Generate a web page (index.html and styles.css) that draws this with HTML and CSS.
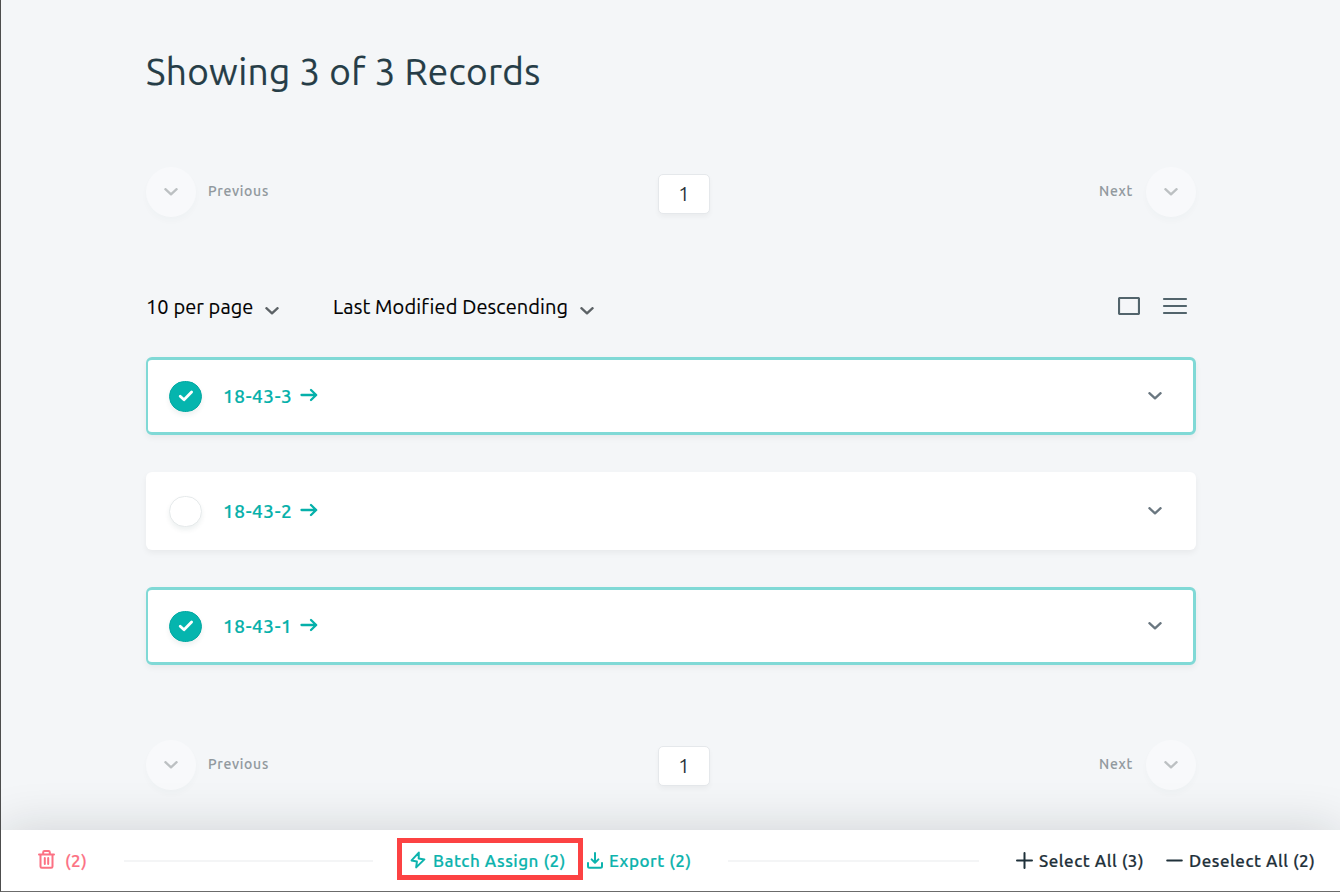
FILE: index.html
```html
<!DOCTYPE html>
<html lang="en">
<head>
<meta charset="utf-8">
<title>Records</title>
<link rel="stylesheet" href="styles.css">
</head>
<body>
<svg class="defs" width="0" height="0">
  <symbol id="chevron" viewBox="0 0 14 8"><path d="M1.400 1.200 7 6.400l5.600-5.200"/></symbol>
  <symbol id="arrow" viewBox="0 0 18 14"><path d="M1.500 7h14.500M11 2 16.200 7 11 12"/></symbol>
  <symbol id="check" viewBox="0 0 16 12"><path d="M2.200 6.300 6 9.800 13.600 2"/></symbol>
</svg>
<div class="screen">
  <main class="content">
    <h1 class="title"><span>Showing 3 of 3 Records</span></h1>

    <nav class="pager">
      <div class="pager-side"><span class="round"><svg class="chev"><use href="#chevron"/></svg></span><span class="pager-label prev">Previous</span></div>
      <span class="page-number">1</span>
      <div class="pager-side"><span class="pager-label next">Next</span><span class="round"><svg class="chev"><use href="#chevron"/></svg></span></div>
    </nav>

    <div class="toolbar">
      <div class="select per-page"><span>10 per page</span><svg class="chev"><use href="#chevron"/></svg></div>
      <div class="select sort"><span>Last Modified Descending</span><svg class="chev"><use href="#chevron"/></svg></div>
      <div class="views">
        <svg width="22" height="18" viewBox="0 0 22 18"><rect x="1" y="1" width="20" height="16" rx="1"/></svg>
        <svg width="26" height="18" viewBox="0 0 26 18"><path d="M2 2h22M2 9h22M2 16h22"/></svg>
      </div>
    </div>

    <div class="records">
      <article class="record selected">
        <span class="tick"><svg width="16" height="12"><use href="#check"/></svg></span>
        <a class="record-name">18-43-3</a><svg class="arrow"><use href="#arrow"/></svg>
        <svg class="chev"><use href="#chevron"/></svg>
      </article>
      <article class="record">
        <span class="tick"></span>
        <a class="record-name">18-43-2</a><svg class="arrow"><use href="#arrow"/></svg>
        <svg class="chev"><use href="#chevron"/></svg>
      </article>
      <article class="record selected">
        <span class="tick"><svg width="16" height="12"><use href="#check"/></svg></span>
        <a class="record-name">18-43-1</a><svg class="arrow"><use href="#arrow"/></svg>
        <svg class="chev"><use href="#chevron"/></svg>
      </article>
    </div>

    <nav class="pager bottom">
      <div class="pager-side"><span class="round"><svg class="chev"><use href="#chevron"/></svg></span><span class="pager-label prev">Previous</span></div>
      <span class="page-number">1</span>
      <div class="pager-side"><span class="pager-label next">Next</span><span class="round"><svg class="chev"><use href="#chevron"/></svg></span></div>
    </nav>
  </main>

  <footer class="actions">
    <div class="action danger">
      <svg width="17" height="19" viewBox="0 0 17 19"><path d="M1 4.500h15M2.500 4.500v12q0 1.300 1.300 1.300h9.400q1.300 0 1.300-1.300v-12M5.200 4V2.300q0-1.300 1.300-1.300h4q1.300 0 1.300 1.300V4M6.800 8v6M10.200 8v6"/></svg>
      <span>(2)</span>
    </div>
    <hr class="rule">
    <div class="action batch">
      <svg width="16" height="18" viewBox="0 0 16 18"><path d="M8.800 1.600 1.600 9.400l5.300 1.100-.7 5.900 8.200-8-5.700-.9z"/></svg>
      <span>Batch Assign (2)</span>
    </div>
    <div class="action export">
      <svg width="16" height="17" viewBox="0 0 16 17"><path d="M8 1v9.500M4.600 7.400 8 10.800l3.400-3.400M1 11v3.300q0 1.500 1.500 1.500h11q1.500 0 1.500-1.500V11"/></svg>
      <span>Export (2)</span>
    </div>
    <hr class="rule">
    <div class="action select-all">
      <svg width="17" height="17" viewBox="0 0 17 17"><path d="M8.500 1v15M1 8.500h15"/></svg>
      <span>Select All (3)</span>
    </div>
    <div class="action deselect-all">
      <svg width="17" height="17" viewBox="0 0 17 17"><path d="M1.200 8.500h14.600"/></svg>
      <span>Deselect All (2)</span>
    </div>
  </footer>
</div>
</body>
</html>
```
FILE: styles.css
```css
* { box-sizing: border-box; }

body {
  margin: 0;
  font-family: Ubuntu, "Noto Sans", sans-serif;
  color: #000;
}

svg {
  display: block;
  flex: none;
  fill: none;
  stroke: currentColor;
  stroke-width: 2;
  stroke-linecap: round;
  stroke-linejoin: round;
}

.defs { position: absolute; }

.screen {
  display: flex;
  flex-direction: column;
  width: 1340px;
  height: 892px;
  overflow: hidden;
  background: #f4f6f8;
  border-left: 1px solid #4d4d4d;
  border-bottom: 1px solid #6b6b6b;
}

.content {
  flex: none;
  width: 1050px;
  height: 830px;
  margin-left: 145px;
}

.title {
  height: 166px;
  margin: 0;
  padding-top: 44px;
  font-size: 37px;
  font-weight: 400;
  line-height: 56px;
  letter-spacing: 0.33px;
  color: #263d47;
  -webkit-text-stroke: 0.2px;
  white-space: nowrap;
}

.pager {
  display: flex;
  justify-content: space-between;
  align-items: flex-start;
  height: 51px;
}

.pager-side {
  display: flex;
  align-items: center;
  width: 200px;
  height: 51px;
}

.pager-side:last-child { justify-content: flex-end; }

.round {
  display: flex;
  align-items: center;
  justify-content: center;
  width: 50px;
  height: 50px;
  border-radius: 50%;
  background: #f8f9fb;
  box-shadow: 0 4px 6px rgba(0, 90, 80, 0.025);
  color: #bcc0c2;
}

.pager-label {
  margin-top: -2px;
  font-size: 14px;
  font-weight: 500;
  line-height: 20px;
  letter-spacing: 0.7px;
  color: #91999e;
  -webkit-text-stroke: 0.1px;
  white-space: nowrap;
}

.prev { margin-left: 12px; }
.next { width: 34px; margin-right: 13px; }

.page-number {
  width: 52px;
  height: 40px;
  margin: 8px 0 0 26px;
  border: 1px solid #e5e8eb;
  border-radius: 5px;
  background: #fff;
  box-shadow: 0 3px 5px rgba(0, 0, 0, 0.04);
  font-size: 20px;
  line-height: 37px;
  text-align: center;
  color: #263238;
}

.chev {
  width: 14px;
  height: 8px;
  stroke-width: 2.3;
}

.toolbar {
  display: flex;
  align-items: center;
  height: 30px;
  margin-top: 75px;
}

.select {
  display: flex;
  align-items: center;
  font-size: 20px;
  line-height: 30px;
  letter-spacing: 0.08px;
  white-space: nowrap;
  -webkit-text-stroke: 0.15px;
}

.per-page span { width: 119px; }
.sort { margin-left: 54px; }
.sort span { width: 247px; letter-spacing: 0.1px; }

.select .chev {
  margin-top: 7px;
  color: #5c6266;
}

.views {
  display: flex;
  align-items: center;
  gap: 22px;
  margin: -2px 8px 0 auto;
  color: #52646c;
}

.views svg { stroke-width: 2.2; }

.records {
  display: flex;
  flex-direction: column;
  gap: 37px;
  margin-top: 35px;
}

.record {
  display: flex;
  align-items: center;
  height: 78px;
  padding: 0 34px 0 23px;
  border-radius: 6px;
  background: #fff;
  box-shadow: 0 3px 6px rgba(0, 0, 0, 0.05);
}

.selected {
  padding: 0 31px 0 21px;
  border: 3px solid #80d9d6;
  border-left-width: 2px;
}

.tick {
  display: flex;
  align-items: center;
  justify-content: center;
  width: 33px;
  height: 31px;
  border: 1px solid #e6eaeb;
  border-radius: 16px;
  background: #fff;
  box-shadow: 0 3px 5px rgba(0, 60, 50, 0.07);
  color: #fff;
}

.tick svg { stroke-width: 2.8; }

.selected .tick {
  border-color: #04a9a3;
  background: #05b5ae;
}

.record-name {
  width: 77px;
  margin-left: 21px;
  font-size: 19px;
  font-weight: 500;
  line-height: 28px;
  letter-spacing: 0.6px;
  color: #05b0aa;
  -webkit-text-stroke: 0.2px;
  white-space: nowrap;
}

.arrow {
  width: 18px;
  height: 14px;
  margin-top: -2px;
  stroke-width: 2.3;
  color: #05b0aa;
}

.record .chev {
  margin: -1px 0 0 auto;
  color: #6a7780;
}

.bottom { margin-top: 74px; }
.bottom .page-number { margin-top: 7px; }

.actions {
  position: relative;
  display: flex;
  flex: none;
  align-items: center;
  height: 61px;
  background: #fff;
  box-shadow: 0 0 50px rgba(20, 25, 28, 0.16);
  font-size: 17px;
  font-weight: 500;
  letter-spacing: 0.52px;
  color: #1f313a;
  -webkit-text-stroke: 0.2px;
}

.action {
  display: flex;
  align-items: center;
  flex: none;
  line-height: 24px;
  white-space: nowrap;
}

.rule {
  flex: none;
  height: 2px;
  margin: 0;
  border: 0;
  background: #f4f5f6;
}

.danger {
  width: 123px;
  padding-left: 37px;
  gap: 10px;
  color: #fc7183;
}

.danger svg { margin-top: -3px; }

.danger + .rule { width: 249px; }

.batch {
  align-self: flex-start;
  width: 186px;
  height: 42px;
  margin: 8px 0 0 24px;
  padding: 3px 0 0 8px;
  gap: 7px;
  border: 5px solid #fc4243;
  color: #0cb3ad;
}

.batch svg { margin-top: -2px; }

.export {
  width: 105px;
  margin-left: 4px;
  gap: 6px;
  color: #0cb3ad;
}

.export + .rule { width: 251px; margin-left: 36px; }

.select-all { width: 150px; margin-left: 37px; gap: 6px; }
.deselect-all { gap: 6px; }
.select-all svg, .deselect-all svg { margin-top: -1px; }
```
